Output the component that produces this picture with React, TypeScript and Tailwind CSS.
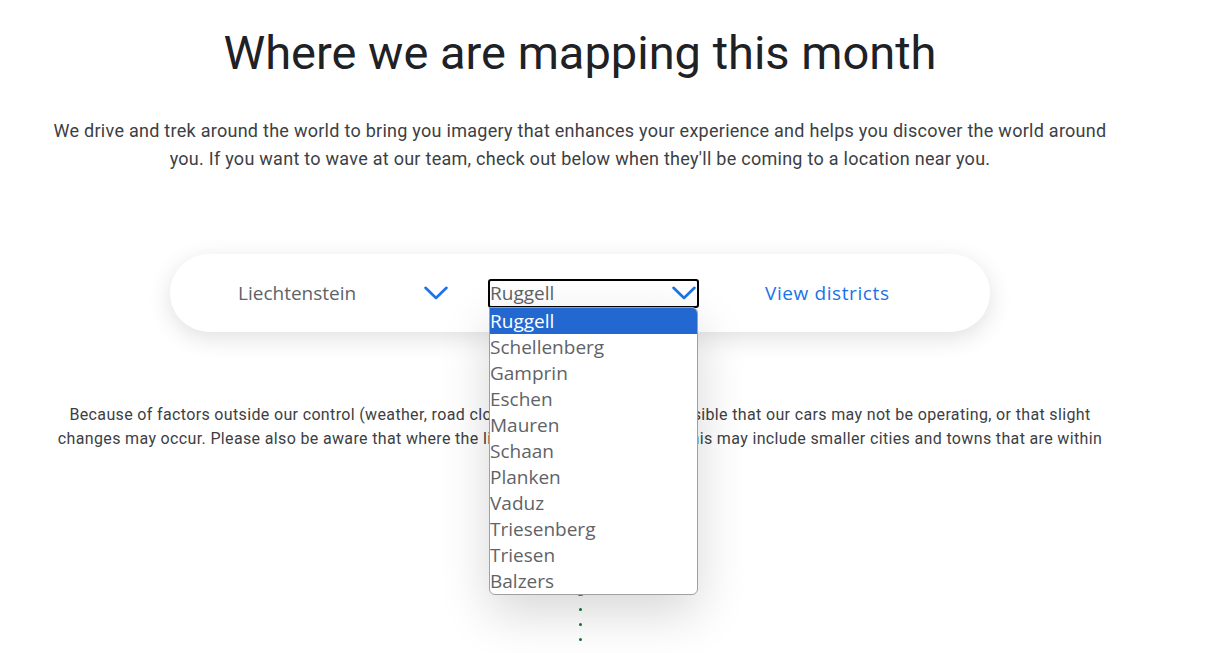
import React from "react";

const Chevron = ({ className = "" }: { className?: string }) => (
  <svg viewBox="0 0 24 14" className={className} fill="none">
    <path d="M1.5 1.8 L12 12 L22.5 1.8" stroke="#1a73e8" strokeWidth="2.6" strokeLinecap="round" strokeLinejoin="round" />
  </svg>
);

const districts = [
  "Ruggell",
  "Schellenberg",
  "Gamprin",
  "Eschen",
  "Mauren",
  "Schaan",
  "Planken",
  "Vaduz",
  "Triesenberg",
  "Triesen",
  "Balzers",
];

export default function App() {
  const sans = { fontFamily: "Roboto, 'Liberation Sans', sans-serif" };
  return (
    <div className="w-[1222px] h-[653px] overflow-hidden bg-white">
      <div className="w-[1160px] flex flex-col items-center">
        <h1
          className="pt-[25px] text-[47px] leading-[56px] text-[#202124] font-normal"
          style={sans}
        >
          Where we are mapping this month
        </h1>
        <p
          className="mt-[36px] w-[1062px] text-center text-[18px] leading-[28px] text-[#3c4043] tracking-[0.27px]"
          style={sans}
        >
          We drive and trek around the world to bring you imagery that enhances your experience and helps you discover the world around you. If you want to wave at our team, check out below when they'll be coming to a location near you.
        </p>

        <div
          className="mt-[81px] w-[820px] h-[78px] rounded-full bg-white shadow-[0_6px_22px_rgba(60,64,67,0.16)] flex items-center pl-[68px]"
          style={{ fontFamily: "'Open Sans', Roboto, sans-serif" }}
        >
          <div className="w-[210px] flex items-center justify-between">
            <span className="text-[19px] text-[#5f6368]">Liechtenstein</span>
            <Chevron className="w-[24px] h-[14px]" />
          </div>
          <div className="relative ml-[40px] w-[211px]">
            <div className="h-[29px] border-2 border-black rounded-[3px] flex items-center justify-between pr-[1px]">
              <span className="text-[19px] text-[#5f6368] leading-none">Ruggell</span>
              <Chevron className="w-[24px] h-[14px]" />
            </div>
            <div className="absolute left-[1px] top-[28px] w-[209px] z-10 bg-white border border-[#a0a0a0] rounded-b-[6px] rounded-tr-[6px] overflow-hidden shadow-[0_18px_50px_rgba(0,0,0,0.16)]">
              {districts.map((d, i) => (
                <div
                  key={d}
                  className={
                    i === 0
                      ? "h-[26px] leading-[26px] text-[19px] bg-[#2368d0] text-white"
                      : "h-[26px] leading-[26px] text-[19px] text-[#5f6368]"
                  }
                >
                  {d}
                </div>
              ))}
            </div>
          </div>
          <span className="ml-[66px] text-[19px] font-medium tracking-[0.6px] text-[#1a73e8]">View districts</span>
        </div>

        <p
          className="mt-[71px] w-[1060px] h-[48px] overflow-hidden text-center text-[16px] leading-[24px] text-[#3c4043] tracking-[0.35px]"
          style={sans}
        >
          Because of factors outside our control (weather, road closures, etc.) it is always possible that our cars may not be operating, or that slight changes may occur. Please also be aware that where the list shows a particular city, this may include smaller cities and towns that are within driving distance.
        </p>

        <div className="mt-[136px] flex flex-col items-center gap-[12px]">
          <div className="w-[9px] h-[9px] rounded-full bg-[#1e8e3e]" />
          <div className="w-[3px] h-[3px] rounded-full bg-[#137333]" />
          <div className="w-[3px] h-[3px] rounded-full bg-[#137333]" />
          <div className="w-[3px] h-[3px] rounded-full bg-[#137333]" />
        </div>
      </div>
    </div>
  );
}
